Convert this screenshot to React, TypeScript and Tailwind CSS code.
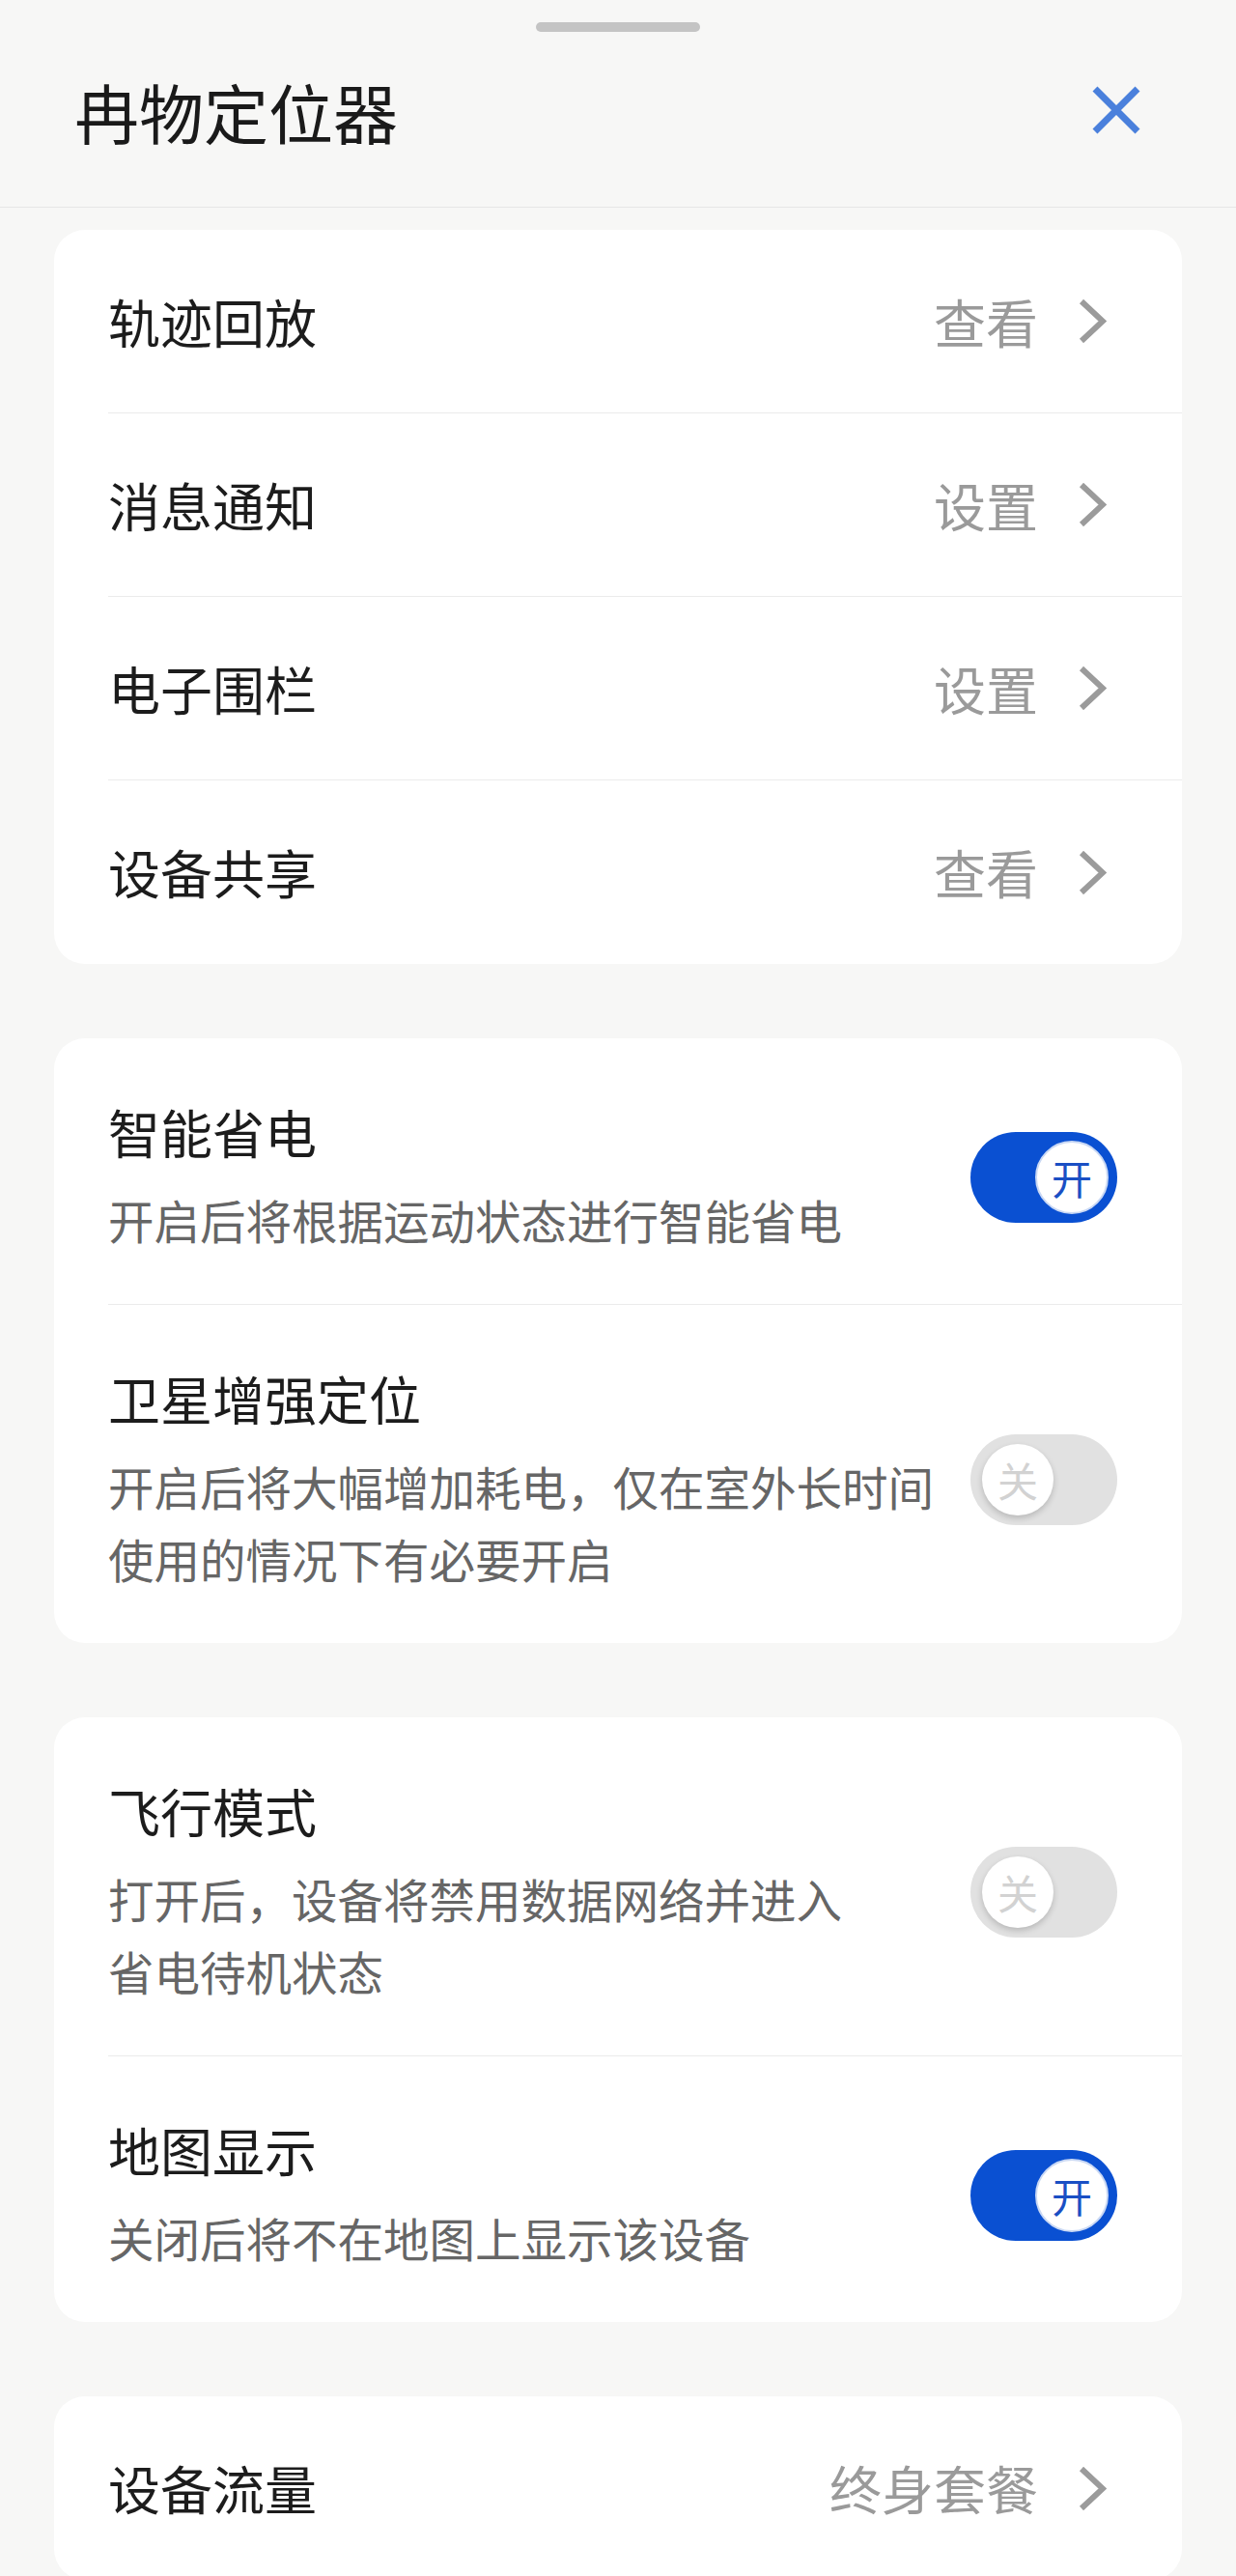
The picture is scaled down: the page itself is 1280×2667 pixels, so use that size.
import type { ReactNode } from 'react';

const FONT = '"Noto Sans CJK SC", "Noto Sans", sans-serif';

type LinkRow = { label: string; value: string };
type SwitchRow = { label: string; lines: string[]; on: boolean };

const LINKS: LinkRow[] = [
  { label: '轨迹回放', value: '查看' },
  { label: '消息通知', value: '设置' },
  { label: '电子围栏', value: '设置' },
  { label: '设备共享', value: '查看' },
];

const POWER: SwitchRow[] = [
  { label: '智能省电', lines: ['开启后将根据运动状态进行智能省电'], on: true },
  {
    label: '卫星增强定位',
    lines: ['开启后将大幅增加耗电，仅在室外长时间', '使用的情况下有必要开启'],
    on: false,
  },
];

const NETWORK: SwitchRow[] = [
  {
    label: '飞行模式',
    lines: ['打开后，设备将禁用数据网络并进入', '省电待机状态'],
    on: false,
  },
  { label: '地图显示', lines: ['关闭后将不在地图上显示该设备'], on: true },
];

function Chevron() {
  return (
    <svg width="29" height="45" viewBox="0 0 29 45" fill="none" aria-hidden>
      <path d="M3 2 L25 22.5 L3 43" stroke="#9b9b9b" strokeWidth="6" />
    </svg>
  );
}

function Toggle({ on }: { on: boolean }) {
  if (on) {
    return (
      <div className="flex h-[94px] w-[152px] shrink-0 items-center justify-end rounded-full bg-[#0a50d2] pr-[9px]">
        <div className="flex h-[76px] w-[76px] items-center justify-center rounded-full border-2 border-[#c9d8f4] bg-white text-[42px] leading-none text-[#1a4fc4]">
          开
        </div>
      </div>
    );
  }
  return (
    <div className="flex h-[94px] w-[152px] shrink-0 items-center justify-start rounded-full bg-[#e1e1e1] pl-[12px]">
      <div className="flex h-[74px] w-[74px] items-center justify-center rounded-full bg-white text-[42px] leading-none text-[#d2d2d2] shadow-[0_3px_6px_rgba(0,0,0,0.18)]">
        关
      </div>
    </div>
  );
}

function Card({ children }: { children: ReactNode }) {
  return <section className="overflow-hidden rounded-[32px] bg-white">{children}</section>;
}

function LinkItem({ row, last }: { row: LinkRow; last: boolean }) {
  return (
    <div className="pl-[56px]">
      <div
        className={`flex h-[190px] items-center justify-between pr-[78px] ${
          last ? '' : 'border-b border-[#ebebeb]'
        }`}
      >
        <span className="text-[54px] leading-none text-[#1c1c1c]">{row.label}</span>
        <span className="flex items-center gap-[42px]">
          <span className="text-[54px] leading-none text-[#9a9a9a]">{row.value}</span>
          <Chevron />
        </span>
      </div>
    </div>
  );
}

function SwitchItem({ row, last }: { row: SwitchRow; last: boolean }) {
  return (
    <div className="pl-[56px]">
      <div
        className={`flex items-center justify-between pb-[50px] pr-[67px] pt-[62px] ${
          last ? '' : 'border-b border-[#ebebeb]'
        }`}
      >
        <div>
          <div className="text-[54px] leading-[70px] text-[#1c1c1c]">{row.label}</div>
          <div className="mt-[18px] text-[47.5px] leading-[75px] text-[#666666]">
            {row.lines.map((line) => (
              <div key={line} className="whitespace-nowrap">
                {line}
              </div>
            ))}
          </div>
        </div>
        <Toggle on={row.on} />
      </div>
    </div>
  );
}

export default function App() {
  return (
    <div className="min-h-[2667px] w-[1280px] bg-[#f7f7f6]" style={{ fontFamily: FONT }}>
      <header className="h-[215px] border-b border-[#e6e6e6] pt-[23px]">
        <div className="mx-auto h-[10px] w-[170px] rounded-full bg-[#c4c4c4]" />
        <div className="mt-[35px] flex h-[92px] items-center justify-between pl-[77px] pr-[98px]">
          <h1 className="text-[67px] font-normal leading-none text-[#1a1a1a]">冉物定位器</h1>
          <svg width="52" height="52" viewBox="0 0 52 52" aria-label="关闭">
            <path d="M4 4 L48 48 M48 4 L4 48" stroke="#4a80dc" strokeWidth="7" />
          </svg>
        </div>
      </header>

      <main className="flex flex-col gap-[77px] px-[56px] pt-[23px]">
        <Card>
          {LINKS.map((row, i) => (
            <LinkItem key={row.label} row={row} last={i === LINKS.length - 1} />
          ))}
        </Card>

        <Card>
          {POWER.map((row, i) => (
            <SwitchItem key={row.label} row={row} last={i === POWER.length - 1} />
          ))}
        </Card>

        <Card>
          {NETWORK.map((row, i) => (
            <SwitchItem key={row.label} row={row} last={i === NETWORK.length - 1} />
          ))}
        </Card>

        <Card>
          <LinkItem row={{ label: '设备流量', value: '终身套餐' }} last />
        </Card>
      </main>
    </div>
  );
}
